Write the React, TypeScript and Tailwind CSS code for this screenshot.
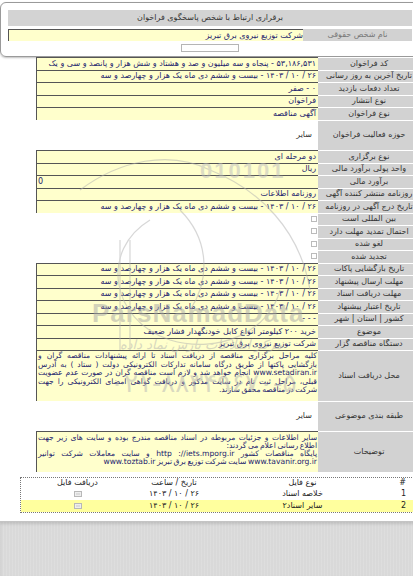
import React from 'react'

type Kind = 'y' | 'w' | 'c' | 'n'

const date = '۲۶ / ۱۰ / ۱۴۰۳ - بیست و ششم دی ماه یک هزار و چهارصد و سه'

const rows: { label: string; value?: string; kind: Kind; h?: string }[] = [
  { label: 'کد فراخوان', value: '۵۳,۱۸۶,۵۳۱ - پنجاه و سه میلیون و صد و هشتاد و شش هزار و پانصد و سی و یک', kind: 'y' },
  { label: 'تاریخ آخرین به روز رسانی', value: date, kind: 'y' },
  { label: 'تعداد دفعات بازدید', value: '۰ - صفر', kind: 'y' },
  { label: 'نوع انتشار', value: 'فراخوان', kind: 'y' },
  { label: 'نوع فراخوان', value: 'آگهی مناقصه', kind: 'y' },
  { label: 'حوزه فعالیت فراخوان', value: 'سایر', kind: 'w', h: 'h-[30.5px]' },
  { label: 'نوع برگزاری', value: 'دو مرحله ای', kind: 'y' },
  { label: 'واحد پولی برآورد مالی', value: 'ریال', kind: 'y' },
  { label: 'برآورد مالی', value: '0', kind: 'n' },
  { label: 'روزنامه منتشر کننده آگهی', value: 'روزنامه اطلاعات', kind: 'y' },
  { label: 'تاریخ درج آگهی در روزنامه', value: date, kind: 'y' },
  { label: 'بین المللی است', kind: 'c' },
  { label: 'احتمال تمدید مهلت دارد', kind: 'c' },
  { label: 'لغو شده', kind: 'c' },
  { label: 'تجدید شده', kind: 'c' },
  { label: 'تاریخ بازگشایی پاکات', value: date, kind: 'y' },
  { label: 'مهلت ارسال پیشنهاد', value: date, kind: 'y' },
  { label: 'مهلت دریافت اسناد', value: date, kind: 'y' },
  { label: 'تاریخ اعتبار پیشنهاد', value: date, kind: 'y' },
  { label: 'کشور | استان | شهر', value: '- - -', kind: 'y' },
  { label: 'موضوع', value: 'خرید ۲۰۰ کیلومتر انواع کابل خودنگهدار فشار ضعیف', kind: 'y' },
  { label: 'دستگاه مناقصه گزار', value: 'شرکت توزیع نیروی برق تبریز', kind: 'y' },
]

const placeLines = [
  'کلیه مراحل برگزاری مناقصه از دریافت اسناد تا ارائه پیشنهادات مناقصه گران و',
  'بازگشایی پاکتها از طریق درگاه سامانه تدارکات الکترونیکی دولت ( ستاد ) به آدرس',
  'www.setadiran.ir انجام خواهد شد و لازم است مناقصه گران در صورت عدم عضویت',
  'قبلی، مراحل ثبت نام در سایت مذکور و دریافت گواهی امضای الکترونیکی را جهت',
]

function FileIcon() {
  return (
    <svg width="8" height="6" viewBox="0 0 8 6">
      <rect x="0.5" y="0.5" width="7" height="5" fill="#eee" stroke="#b8b8b8" />
      <line x1="2" y1="3" x2="6" y2="3" stroke="#c8c8c8" />
    </svg>
  )
}

function Label({ text, h = 'h-[12.5px]' }: { text: string; h?: string }) {
  return (
    <div className={`${h} flex w-[102px] shrink-0 items-center justify-center overflow-hidden whitespace-nowrap border-t border-white bg-[#d2d2d2] text-[#333]`}>
      {text}
    </div>
  )
}

function Row({ label, value, kind, h = 'h-[12.5px]' }: { label: string; value?: string; kind: Kind; h?: string }) {
  return (
    <div className="flex">
      <Label text={label} h={h} />
      {kind === 'y' && (
        <div className={`${h} flex w-[282px] items-center overflow-hidden whitespace-nowrap border-l border-t border-[#555] bg-[#ffffcc] pr-[2px] text-[#24246e]`}>
          {value}
        </div>
      )}
      {kind === 'n' && (
        <div dir="ltr" className={`${h} flex w-[282px] items-center border-l border-t border-[#555] bg-[#ffffcc] pl-[1px] text-[#24246e]`}>
          {value}
        </div>
      )}
      {kind === 'w' && (
        <div className={`${h} flex w-[282px] items-center pr-[6px] text-[#333]`}>{value}</div>
      )}
      {kind === 'c' && (
        <div className={`${h} flex w-[282px] items-center pr-[1px]`}>
          <div className="h-[6px] w-[6px] border border-[#bbb] bg-white" />
        </div>
      )}
    </div>
  )
}

export default function App() {
  return (
    <div className="relative h-[576px] w-[413px] overflow-hidden bg-white font-['DejaVu_Sans',sans-serif] text-[8px] leading-none">
      <div dir="rtl" className="flex h-full w-[420px] flex-col">
        {/* contact box */}
        <div className="mt-[2px] h-[55px] rounded-[6px] border border-[#9a9a9a] px-[7px] pt-[7px] shadow-[0_1px_2px_rgba(0,0,0,0.25)]">
          <div className="flex h-[16px] items-center justify-center bg-[#d3d3d3] text-[#333]">
            برقراری ارتباط با شخص پاسخگوی فراخوان
          </div>
          <div className="mt-[3px] flex h-[12px]">
            <div className="flex w-[109px] items-center justify-center bg-[#d2d2d2] text-[#777]">نام شخص حقوقی</div>
            <div className="flex flex-1 items-center border-l border-t border-[#555] bg-[#ffffcc] text-[#24246e]">
              شرکت توزیع نیروی برق تبریز
            </div>
          </div>
          <div className="mx-auto mt-[3px] h-[8px] w-[58px] border border-[#b5b5b5] bg-white" />
        </div>

        {/* details */}
        <div>
          {rows.map((r) => (
            <Row key={r.label} {...r} />
          ))}
          <div className="flex">
            <Label text="محل دریافت اسناد" h="h-[50.5px]" />
            <div className="h-[50.5px] w-[282px] overflow-hidden border-l border-t border-[#555] bg-[#ffffcc] px-[1px] pt-[1px] text-[7.6px] leading-[8.5px] text-[#24246e] [word-spacing:-0.8px]">
              {placeLines.map((l) => (
                <p key={l} className="whitespace-nowrap text-justify [text-align-last:justify]">{l}</p>
              ))}
              <p className="whitespace-nowrap">شرکت در مناقصه محقق سازند.</p>
            </div>
          </div>
          <Row label="طبقه بندی موضوعی" value="سایر" kind="w" h="h-[30px]" />
          <div className="flex">
            <Label text="توضیحات" h="h-[41px]" />
            <div className="h-[41px] w-[282px] overflow-hidden border-l border-t border-[#555] bg-[#ffffcc] px-[1px] pt-[2px] text-[7.6px] leading-[8px] text-[#24246e] [word-spacing:-0.8px]">
              <p className="whitespace-nowrap text-justify [text-align-last:justify]">سایر اطلاعات و جزئیات مربوطه در اسناد مناقصه مندرج بوده و سایت های زیر جهت</p>
              <p className="whitespace-nowrap">اطلاع رسانی اعلام می گردند:</p>
              <p className="whitespace-nowrap text-justify [text-align-last:justify]">پایگاه مناقصات کشور http ://iets.mporg.ir و سایت معاملات شرکت توانیر</p>
              <p className="whitespace-nowrap">www.tavanir.org.ir سایت شرکت توزیع برق تبریز www.toztab.ir</p>
            </div>
          </div>
        </div>

        {/* files */}
        <div className="ml-[20px] mt-[5px] border border-dotted border-[#777] text-[#222]">
          <div className="grid h-[11px] grid-cols-[28px_177px_80px_1fr] items-center">
            <div className="pr-[13px]">#</div>
            <div className="text-center">نوع فایل</div>
            <div className="flex justify-center whitespace-nowrap">تاریخ / ساعت</div>
            <div className="text-center">دریافت فایل</div>
          </div>
          <div className="grid h-[11px] grid-cols-[28px_177px_80px_1fr] items-center">
            <div className="pr-[13px]">1</div>
            <div className="text-center">خلاصه اسناد</div>
            <div className="flex justify-center whitespace-nowrap">۲۶ / ۱۰ / ۱۴۰۳</div>
            <div className="flex justify-center"><FileIcon /></div>
          </div>
          <div className="grid h-[12px] grid-cols-[28px_177px_80px_1fr] items-center bg-[#ffff9e]">
            <div className="pr-[13px]">2</div>
            <div className="text-center">سایر اسناد۲</div>
            <div className="flex justify-center whitespace-nowrap">۲۶ / ۱۰ / ۱۴۰۳</div>
            <div className="flex justify-center"><FileIcon /></div>
          </div>
        </div>

        <div className="mt-[8px] flex-1 border-t border-[#c4c4c4] bg-[#d9d9d9] bg-[repeating-linear-gradient(90deg,rgba(255,255,255,0.12)_0px,rgba(255,255,255,0.12)_1px,transparent_1px,transparent_3px)] shadow-[inset_0_2px_3px_rgba(0,0,0,0.12)]" />
      </div>

      {/* watermark */}
      <div className="pointer-events-none absolute inset-0 opacity-50">
        <svg className="absolute left-[60px] top-[150px]" width="280" height="220" viewBox="0 0 280 220" fill="none" stroke="#b0b0b0" strokeWidth="1.2">
          <path d="M20 40 C 60 10, 110 0, 150 20" />
          <path d="M150 20 C 200 40, 240 80, 250 140" />
          <path d="M90 70 C 40 100, 50 170, 110 190 C 160 205, 210 180, 220 140" />
          <path d="M60 90 L60 200" />
          <path d="M70 90 L70 200" />
          <path d="M120 60 C 150 90, 150 130, 130 160" />
        </svg>
        <div className="absolute left-[200px] top-[160px] font-['Liberation_Sans',sans-serif] text-[22px] font-bold tracking-[2px] text-[#bdbdbd]">010101</div>
        <div className="absolute left-[92px] top-[300px] font-['Liberation_Sans',sans-serif] text-[26px] font-bold tracking-[1px] text-[#a8a8a8]">ParsNamadData</div>
        <div dir="rtl" className="absolute left-[120px] top-[338px] text-[13px] italic text-[#b0b0b0]">مرکز اطلاعات پارس نماد داده</div>
        <div dir="ltr" className="absolute left-[110px] top-[370px] text-[26px] text-[#b5b5b5]">۰۲۱-۸۸۳۴۹۶۷۰-۵</div>
      </div>
    </div>
  )
}
